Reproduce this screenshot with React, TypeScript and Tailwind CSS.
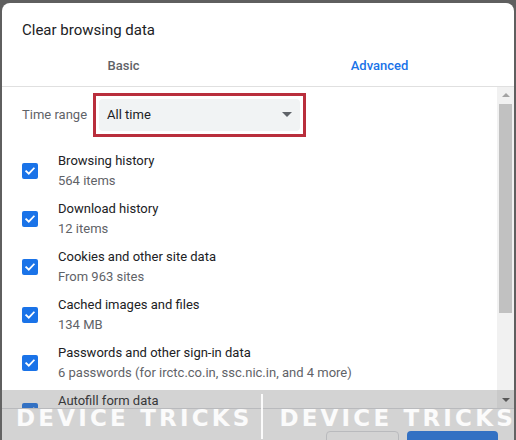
import React from "react";

const items = [
  { label: "Browsing history", sub: "564 items" },
  { label: "Download history", sub: "12 items" },
  { label: "Cookies and other site data", sub: "From 963 sites" },
  { label: "Cached images and files", sub: "134 MB" },
  { label: "Passwords and other sign-in data", sub: "6 passwords (for irctc.co.in, ssc.nic.in, and 4 more)" },
  { label: "Autofill form data", sub: "" },
];

function Check() {
  return (
    <div className="w-[16px] h-[16px] rounded-[2px] bg-[#1a73e8] flex items-center justify-center shrink-0">
      <svg width="12" height="12" viewBox="0 0 12 12">
        <path d="M2.2 6.2 L4.8 8.7 L9.8 3.4" stroke="white" strokeWidth="1.8" fill="none" strokeLinecap="square" />
      </svg>
    </div>
  );
}

export default function App() {
  return (
    <div
      className="relative w-[516px] h-[440px] overflow-hidden bg-[#5f5f5f] pl-[2px] pt-[3px] pr-[2px]"
      style={{ fontFamily: "Roboto, 'Noto Sans', sans-serif" }}
    >
      <div className="w-[512px] h-[460px] bg-white rounded-t-[8px] flex flex-col">
        <div className="pt-[17px] pl-[20px] h-[37px] text-[15px] leading-[20px] text-[#202124]">
          Clear browsing data
        </div>
        <div className="mt-[5px] h-[41px] flex text-[13px] font-medium">
          <div className="w-[243px] flex items-center justify-center text-[#5f6368]">Basic</div>
          <div className="w-[269px] flex items-center justify-center text-[#1a73e8]">Advanced</div>
        </div>
        <div className="h-px bg-[#e0e0e0]" />
        <div className="h-[323px] flex overflow-hidden">
          <div className="w-[495px] pl-[20px] pt-[6px] flex flex-col">
            <div className="flex items-center gap-[6px] h-[44px]">
              <span className="text-[13px] text-[#5f6368]">Time range</span>
              <div className="w-[213px] h-[44px] border-[3px] border-[#b92e3c] p-[3px] flex">
                <div className="flex-1 bg-[#f1f3f4] rounded-[4px] flex items-center justify-between pl-[8px] pr-[8px] text-[13px] text-[#202124]">
                  <span>All time</span>
                  <svg width="10" height="5" viewBox="0 0 10 5">
                    <path d="M0 0 L10 0 L5 5 Z" fill="#5f6368" />
                  </svg>
                </div>
              </div>
            </div>
            <div className="mt-[10px] flex flex-col">
              {items.map((it) => (
                <div key={it.label} className="h-[48px] flex items-center gap-[20px] shrink-0">
                  <Check />
                  <div className="flex flex-col text-[13px] leading-[20px]">
                    <span className="text-[#202124]">{it.label}</span>
                    <span className="text-[#5f6368]">{it.sub || "\u00a0"}</span>
                  </div>
                </div>
              ))}
            </div>
          </div>
          <div className="w-[17px] bg-[#f1f1f1] flex flex-col items-center">
            <div className="h-[17px] w-full flex items-center justify-center">
              <svg width="8" height="4" viewBox="0 0 8 4">
                <path d="M0 4 L8 4 L4 0 Z" fill="#a3a3a3" />
              </svg>
            </div>
            <div className="h-[209px] w-[13px] bg-[#c1c1c1]" />
            <div className="flex-1" />
            <div className="h-[17px] w-full flex items-center justify-center">
              <svg width="8" height="4" viewBox="0 0 8 4">
                <path d="M0 0 L8 0 L4 4 Z" fill="#505050" />
              </svg>
            </div>
          </div>
        </div>
        <div className="border-t border-[#dadce0] pt-[22px] pr-[16px] flex justify-end gap-[8px]">
          <button className="w-[73px] h-[32px] rounded-[4px] border border-[#dadce0] bg-white text-[13px] text-[#1a73e8] font-medium">
            Cancel
          </button>
          <button className="w-[91px] h-[32px] rounded-[4px] bg-[#1a73e8] text-[13px] text-white font-medium">
            Clear data
          </button>
        </div>
      </div>

      <div className="absolute left-0 right-0 top-[390px] h-[50px] bg-[rgba(110,110,110,0.3)] flex items-center">
        <div
          className="w-[263px] pl-[16px] text-[23px] font-bold text-white/90 tracking-[3.2px] whitespace-nowrap leading-none pt-[6px]"
          style={{ fontFamily: "'DejaVu Sans', sans-serif" }}
        >
          DEVICE TRICKS
        </div>
        <div className="w-[2px] h-[45px] bg-white/90 mt-[3px]" />
        <div
          className="pl-[16px] text-[23px] font-bold text-white/90 tracking-[3.2px] whitespace-nowrap leading-none pt-[6px]"
          style={{ fontFamily: "'DejaVu Sans', sans-serif" }}
        >
          DEVICE TRICKS
        </div>
      </div>
    </div>
  );
}
